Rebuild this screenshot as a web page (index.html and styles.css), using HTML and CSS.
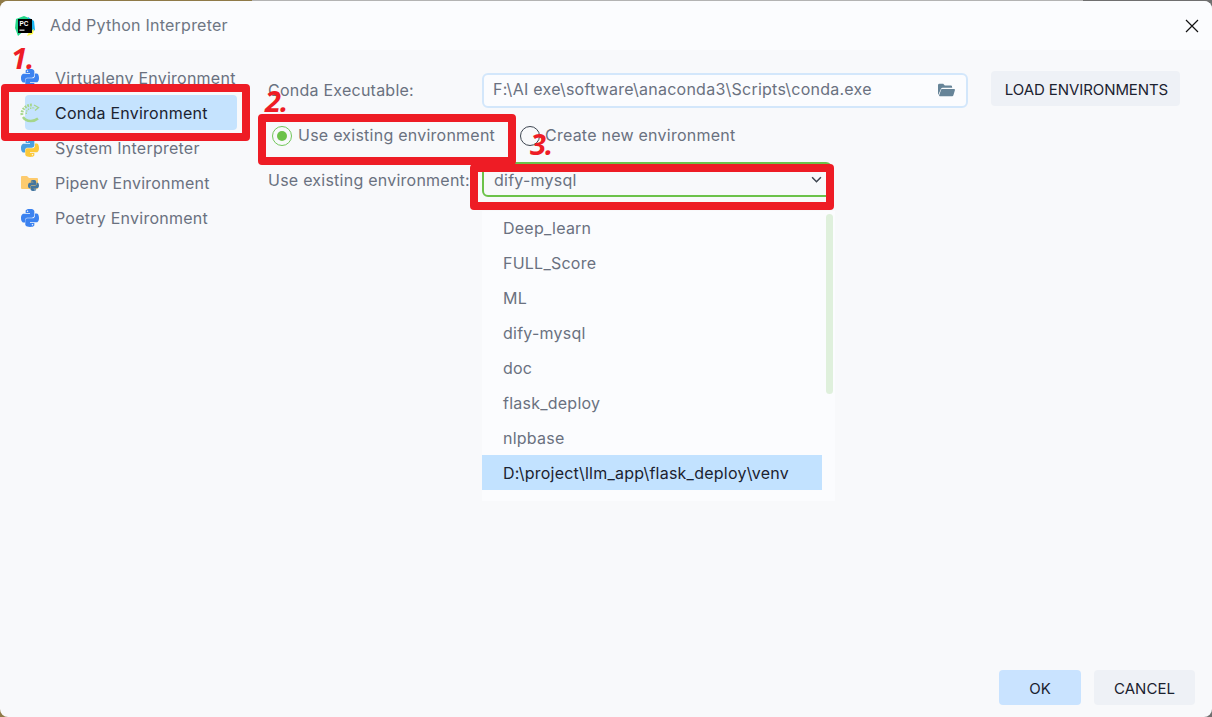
FILE: index.html
```html
<!DOCTYPE html>
<html lang="en">
<head>
<meta charset="utf-8">
<title>Add Python Interpreter</title>
<link rel="stylesheet" href="styles.css">
</head>
<body>
<svg class="defs" width="0" height="0">
  <symbol id="py-top" viewBox="0 0 24 24"><path d="M11.914 0C5.82 0 6.2 2.656 6.2 2.656l.007 2.752h5.814v.826H3.9S0 5.789 0 11.969c0 6.18 3.403 5.96 3.403 5.96h2.03v-2.867s-.109-3.42 3.35-3.42h5.766s3.24.052 3.24-3.148V3.202S18.28 0 11.913 0zM8.708 1.85c.578 0 1.046.47 1.046 1.052 0 .581-.468 1.051-1.046 1.051-.579 0-1.046-.47-1.046-1.051 0-.582.467-1.052 1.046-1.052z"/></symbol>
  <symbol id="py-bot" viewBox="0 0 24 24"><path d="M12.087 24c6.092 0 5.712-2.656 5.712-2.656l-.007-2.752h-5.814v-.826h8.123s3.9.445 3.9-5.735c0-6.18-3.404-5.96-3.404-5.96h-2.03v2.867s.109 3.42-3.35 3.42H8.95s-3.24-.052-3.24 3.148v5.292S5.72 24 12.087 24zm3.206-1.85c-.579 0-1.046-.47-1.046-1.052 0-.581.467-1.051 1.046-1.051.578 0 1.046.47 1.046 1.051 0 .582-.468 1.052-1.046 1.052z"/></symbol>
</svg>
<div class="dialog">
  <header class="titlebar">
    <svg class="pc-logo" viewBox="0 0 20 20">
      <path class="pc-green" d="M1 3 L9 0 L14 2 L12 12 L3 20 L0 12 Z"/>
      <path class="pc-blue" d="M13 1 L19 5 L20 14 L14 18 Z"/>
      <path class="pc-yellow" d="M14 16 L19 13 L18 18 L12 20 Z"/>
      <rect class="pc-black" x="3" y="3" width="14" height="14"/>
      <text class="pc-text" x="4.5" y="10">PC</text>
      <rect class="pc-line" x="4.5" y="13.6" width="5" height="1.1"/>
    </svg>
    <span class="title">Add Python Interpreter</span>
    <svg class="close" viewBox="0 0 14 14"><path d="M1 1 L13 13 M13 1 L1 13"/></svg>
  </header>
  <main class="main">
    <nav class="sidebar">
      <div class="row">
        <svg class="ic" viewBox="0 0 24 24"><use href="#py-top" class="blue"/><use href="#py-bot" class="blue"/></svg>
        <span>Virtualenv Environment</span>
      </div>
      <div class="row selected">
        <svg class="ic conda" viewBox="0 0 18 18">
          <path class="c-solid" d="M17 14.5 C13.5 17.5 5.5 18.5 2 13"/>
          <path class="c-dash" d="M1 11 C0 6 5 0.8 11 1"/>
          <path class="c-dash2" d="M5.4 10 C4.5 6 9 3.2 14 4"/>
          <path class="c-tip" d="M13 1 L17.5 3.5 L14 6.5"/>
        </svg>
        <span>Conda Environment</span>
      </div>
      <div class="row">
        <svg class="ic" viewBox="0 0 24 24"><use href="#py-top" class="sky"/><use href="#py-bot" class="gold"/></svg>
        <span>System Interpreter</span>
      </div>
      <div class="row">
        <svg class="ic" viewBox="0 0 18 18">
          <path class="folder" d="M0 3 a1 1 0 0 1 1-1 h5 l2 2 h8 a1 1 0 0 1 1 1 v9 a1 1 0 0 1-1 1 h-15 a1 1 0 0 1-1-1 z"/>
          <svg x="7" y="6" width="11" height="11" viewBox="0 0 24 24"><use href="#py-top" class="steel"/><use href="#py-bot" class="steel"/></svg>
        </svg>
        <span>Pipenv Environment</span>
      </div>
      <div class="row">
        <svg class="ic" viewBox="0 0 24 24"><use href="#py-top" class="blue"/><use href="#py-bot" class="blue"/></svg>
        <span>Poetry Environment</span>
      </div>
    </nav>
    <section class="content">
      <div class="exec-row">
        <span class="label">Conda Executable:</span>
        <div class="input">
          <span class="input-text">F:\AI exe\software\anaconda3\Scripts\conda.exe</span>
          <svg class="open-folder" viewBox="0 0 18 14">
            <path d="M0 2 a1.5 1.5 0 0 1 1.5-1.5 h4 l1.7 1.7 h6.3 a1.5 1.5 0 0 1 1.5 1.5 v1 h-10 a2 2 0 0 0-1.9 1.3 L0.4 12 A1 1 0 0 1 0 11 Z"/>
            <path d="M4.3 6 h12.6 a1 1 0 0 1 1 1.3 l-1.6 5.2 a1.4 1.4 0 0 1-1.4 1 h-13 a.8.8 0 0 1-.7-1 l2-5.5 a1 1 0 0 1 1-1 z"/>
          </svg>
        </div>
        <button class="btn load">LOAD ENVIRONMENTS</button>
      </div>
      <div class="radio-row">
        <span class="radio on"><span class="dot"></span></span>
        <span class="radio-text first">Use existing environment</span>
        <span class="radio"></span>
        <span class="radio-text second">Create new environment</span>
      </div>
      <div class="select-row">
        <span class="label">Use existing environment:</span>
        <div class="select">
          <span>dify-mysql</span>
          <svg class="chev" viewBox="0 0 10 6"><path d="M1 1 L5 5 L9 1"/></svg>
        </div>
      </div>
      <div class="dropdown">
        <ul class="options">
          <li>Deep_learn</li>
          <li>FULL_Score</li>
          <li>ML</li>
          <li>dify-mysql</li>
          <li>doc</li>
          <li>flask_deploy</li>
          <li>nlpbase</li>
          <li class="active">D:\project\llm_app\flask_deploy\venv</li>
        </ul>
        <div class="scrollbar"></div>
      </div>
    </section>
  </main>
  <footer class="footer">
    <button class="btn ok">OK</button>
    <button class="btn cancel">CANCEL</button>
  </footer>
  <div class="mark mark-1"></div>
  <div class="mark mark-2"></div>
  <div class="mark mark-3"></div>
  <span class="num num-1">1.</span>
  <span class="num num-2">2.</span>
  <span class="num num-3">3.</span>
</div>
</body>
</html>
```
FILE: styles.css
```css
* { box-sizing: border-box; }
html, body { margin: 0; height: 100%; overflow: hidden; }
body {
  background: linear-gradient(to right, #8f7a48 0, #8f7a48 252px, #b3b3b3 252px, #b3b3b3 1083px, #6f6f6f 1083px);
  font-family: Inter, "Noto Sans", sans-serif;
  font-size: 16px;
  letter-spacing: .24px;
  color: #6a7180;
}
.defs { position: absolute; }
.dialog {
  position: relative;
  margin-top: 1px;
  height: 716px;
  display: flex;
  flex-direction: column;
  background: #f8f9fb;
  border-radius: 8px;
  overflow: hidden;
}
.titlebar {
  height: 49px;
  flex: none;
  display: flex;
  align-items: center;
  padding: 0 13px 0 15px;
  background: #fbfcfe;
}
.pc-logo { width: 20px; height: 20px; flex: none; }
.pc-green { fill: #21d789; }
.pc-blue { fill: #19b5f1; }
.pc-yellow { fill: #fcf84a; }
.pc-black { fill: #000; }
.pc-text { fill: #fff; font: 700 6.4px "Liberation Sans", sans-serif; letter-spacing: 0; }
.pc-line { fill: #fff; }
.title { margin-left: 15px; padding-bottom: 2px; color: #6e7683; }
.close { width: 14px; height: 14px; margin-left: auto; fill: none; stroke: #111; stroke-width: 1.2; }
.main { flex: 1; display: flex; min-height: 0; }
.sidebar { width: 268px; flex: none; padding: 10px 0 0 25px; }
.row { width: 212px; height: 35px; display: flex; align-items: center; gap: 16px; border-radius: 4px; white-space: nowrap; }
.row .ic { margin-left: -4px; }
.row.selected { background: #c5e3fe; color: #1b2230; }
.ic { width: 18px; height: 18px; flex: none; }
.blue { fill: #3b82f0; }
.sky { fill: #4a9fe0; }
.gold { fill: #fcc93a; }
.steel { fill: #44769f; }
.folder { fill: #fdcb6e; }
.conda { fill: none; overflow: visible; }
.c-solid { stroke: #a5d68b; stroke-width: 2.4; fill: none; }
.c-dash { stroke: #a5d68b; stroke-width: 2.8; stroke-dasharray: 1.8 1; fill: none; }
.c-dash2 { stroke: #a5d68b; stroke-width: 1.4; stroke-dasharray: 1.4 1; fill: none; }
.c-tip { stroke: #a5d68b; stroke-width: 1.3; fill: none; }
.content { position: relative; flex: 1; min-width: 0; }
.exec-row { display: flex; align-items: center; height: 36px; margin-top: 22px; }
.label { width: 214px; flex: none; white-space: nowrap; }
.input {
  width: 486px; height: 35px; flex: none;
  display: flex; align-items: center; justify-content: space-between;
  padding: 0 11px 0 9px;
  border: 2px solid #d3e7fb;
  border-radius: 6px;
  background: #fbfcfe;
  white-space: nowrap;
}
.input-text { padding-bottom: 2px; }
.open-folder { width: 17px; height: 14px; fill: #668498; }
.btn {
  font-family: Inter, "Noto Sans", sans-serif;
  font-size: 15px;
  font-weight: 400;
  letter-spacing: .05px;
  height: 35px;
  border: 0;
  border-radius: 4px;
  color: #1b2230;
  background: #eef1f6;
  padding: 1px 0 0;
}
.load { width: 189px; margin: 0 0 3px 23px; padding: 2px 0 0 2px; letter-spacing: -.08px; flex: none; }
.radio-row { display: flex; align-items: center; height: 22px; margin: 17px 0 0 4px; }
.radio {
  width: 20px; height: 20px; flex: none;
  border: 1.5px solid #3d4550;
  border-radius: 50%;
  display: flex; align-items: center; justify-content: center;
}
.radio.on { border-color: #72c75a; }
.dot { width: 10px; height: 10px; border-radius: 50%; background: #6cc24a; }
.radio-text { margin-left: 6px; padding-bottom: 2px; white-space: nowrap; }
.radio-text.first { width: 222px; }
.radio-text.second { margin-left: 5px; }
.select-row { display: flex; align-items: center; height: 35px; margin-top: 15px; }
.select {
  width: 350px; height: 35px; flex: none;
  display: flex; align-items: center; justify-content: space-between;
  padding: 0 8px 0 10px;
  border: 2px solid #6cc24a;
  border-radius: 6px;
}
.chev { width: 11px; height: 7px; fill: none; stroke: #3d4550; stroke-width: 1.4; }
.dropdown {
  position: absolute;
  left: 214px; top: 161px;
  width: 353px; height: 290px;
  background: #fbfcfe;
}
.options { list-style: none; margin: 0; padding: 0; width: 340px; }
.options li { height: 35px; line-height: 35px; padding-left: 21px; white-space: nowrap; }
.options li.active { margin-top: -1px; padding-top: 1px; background: #c2e2ff; color: #1b2230; }
.scrollbar {
  position: absolute;
  left: 344px; top: 3px;
  width: 7px; height: 180px;
  border-radius: 4px;
  background: #dff0dc;
}
.footer { height: 47px; flex: none; display: flex; justify-content: flex-end; gap: 13px; padding: 0 17px 0 0; }
.ok { width: 82px; background: #c9e3ff; }
.cancel { width: 101px; }
.mark {
  position: absolute;
  border: 8px solid #ee1c25;
  border-radius: 4px;
}
.mark-1 { left: 1px; top: 83px; width: 249px; height: 57px; }
.mark-2 { left: 258px; top: 113px; width: 258px; height: 51px; }
.mark-3 { left: 470px; top: 163px; width: 364px; height: 46px; }
.num {
  position: absolute;
  font-family: "Open Sans", sans-serif;
  font-size: 29px;
  font-weight: 700;
  font-style: italic;
  letter-spacing: -1px;
  line-height: 1;
  color: #ee1c25;
}
.num-1 { left: 11px; top: 42px; }
.num-2 { left: 265px; top: 85px; }
.num-3 { left: 530px; top: 128px; }
```
